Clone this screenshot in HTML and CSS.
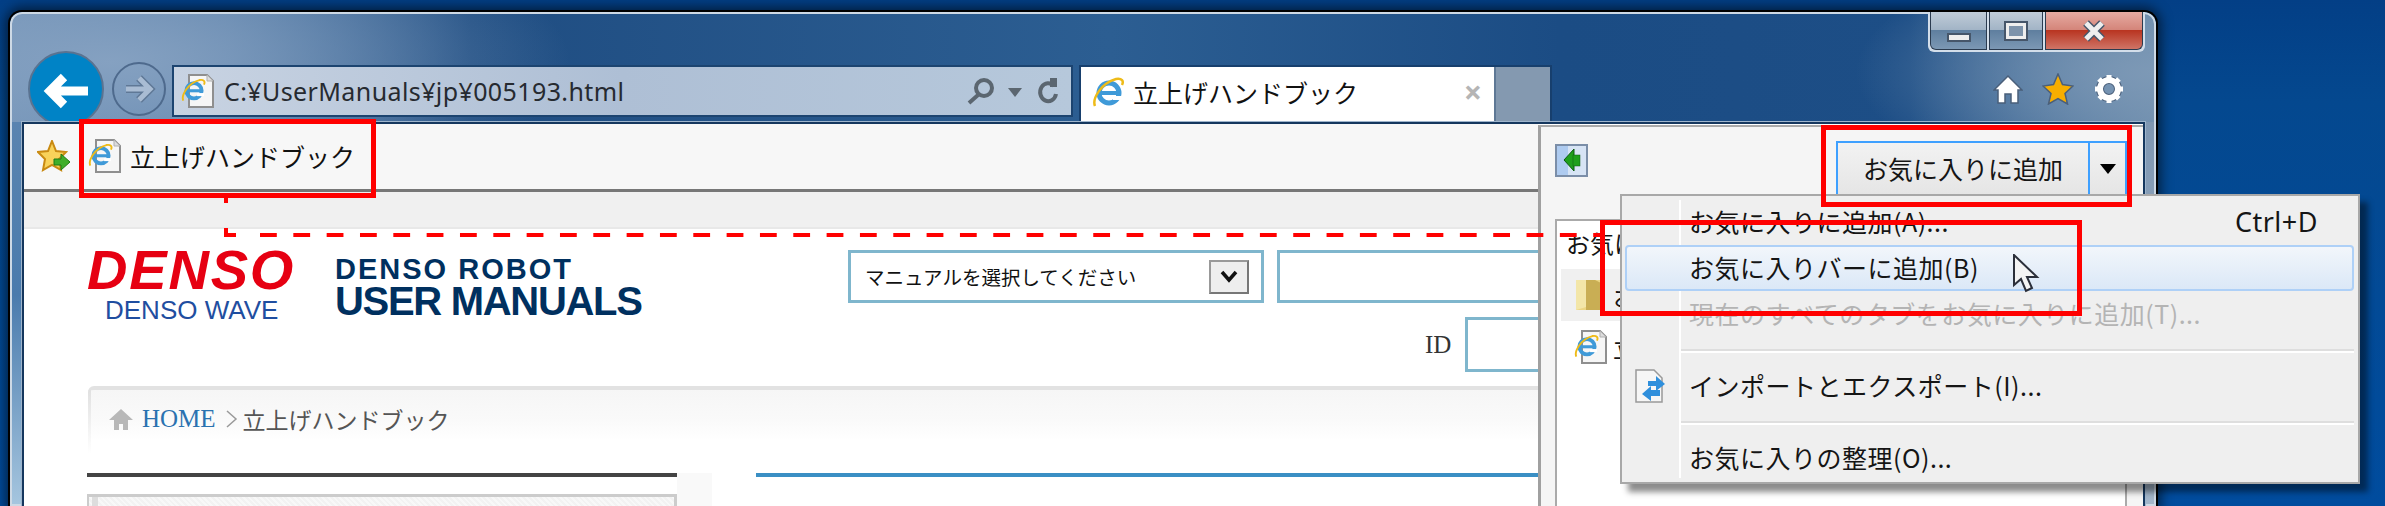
FILE: index.html
```html
<!DOCTYPE html>
<html lang="ja">
  <head>
    <meta charset="UTF-8" />
    <title>立上げハンドブック</title>
    <link rel="stylesheet" href="styles.css">
  </head>
  <body>
    <svg class="defs" width="0" height="0">
      <symbol id="ie-e" viewBox="0 0 34 34">
        <circle cx="17" cy="18" r="10" fill="none" stroke="#3f9ad8" stroke-width="5" />
        <rect x="8" y="16" width="19" height="4" fill="#3f9ad8" />
        <rect x="21" y="21" width="9" height="4" fill="#fff" />
        <path d="M3 31C0 24 9 8 24 4c6-1 8 2 6 6" fill="none" stroke="#eebb18" stroke-width="2.5" />
      </symbol>
      <symbol id="ie-page" viewBox="0 0 34 34">
        <path d="M8 1h18l6 6v26H8z" fill="#f6f6f6" stroke="#8f8f8f" stroke-width="2" />
        <path d="M26 1v6h6" fill="#ddd" stroke="#b0b0b0" stroke-width="1" />
        <use href="#ie-e" x="0" y="3" width="26" height="26" />
      </symbol>
    </svg>

    <div class="window">
      <div class="chrome">
        <button class="back">
          <svg width="72" height="72" viewBox="0 0 72 72"><path d="M34 24 20 38l14 14M22 38h36" fill="none" stroke="#fff" stroke-width="9" /></svg>
        </button>
        <button class="forward">
          <svg width="50" height="50" viewBox="0 0 50 50"><path d="M25 14l11 11-11 11M12 25h23" fill="none" stroke="#5f7896" stroke-width="8" /><path d="M25 14l11 11-11 11M12 25h23" fill="none" stroke="#a9bcd3" stroke-width="5" /></svg>
        </button>
        <div class="address">
          <svg class="icon-page" width="34" height="34"><use href="#ie-page" /></svg>
          <span class="address-text">C:¥UserManuals¥jp¥005193.html</span>
          <svg width="30" height="28" viewBox="0 0 30 28"><circle cx="18" cy="11" r="8" fill="none" stroke="#5b6670" stroke-width="4" /><path d="M12 18 3 26" stroke="#5b6670" stroke-width="4" /></svg>
          <span class="address-caret"></span>
          <svg width="22" height="28" viewBox="0 0 22 28"><path d="M17 9a8 9 0 1 0 2 8" fill="none" stroke="#5b6670" stroke-width="4" /><path d="M13 1h7v9h-7z" fill="#5b6670" /></svg>
        </div>
        <div class="tabs">
          <div class="tab">
            <svg width="34" height="34"><use href="#ie-e" /></svg>
            <span class="tab-title">立上げハンドブック</span>
            <span class="tab-close">×</span>
          </div>
          <div class="tab-new"></div>
        </div>
        <div class="chrome-right">
          <div class="caption">
            <div class="cap cap-min"><span class="glyph-min"></span></div>
            <div class="cap cap-max"><span class="glyph-max"></span></div>
            <div class="cap cap-close">
              <svg width="24" height="22" viewBox="0 0 24 22"><path d="M4 3l16 16M20 3 4 19" stroke="#46566a" stroke-width="8" /><path d="M4 3l16 16M20 3 4 19" stroke="#eee" stroke-width="5" /></svg>
            </div>
          </div>
          <div class="tools">
            <svg width="30" height="30" viewBox="0 0 30 30"><path d="M15 2 1 16h4v13h7v-9h6v9h7V16h4z" fill="#fff" stroke="#4a5f7a" stroke-width="1.5" /></svg>
            <svg width="32" height="32" viewBox="0 0 32 32"><path d="M16 1l4.500 10.500L31 13l-8 7.500L25.500 31 16 25.500 6.500 31 9 20.500 1 13l10.500-1.500z" fill="#f7ae00" stroke="#4a5f7a" stroke-width="1.500" /></svg>
            <svg width="32" height="30" viewBox="0 0 32 30"><circle cx="16" cy="15" r="9" fill="none" stroke="#4a5f7a" stroke-width="8" /><circle cx="16" cy="15" r="9" fill="none" stroke="#fff" stroke-width="6" /><path d="M16 1v28M2 15h28M6 5l20 20M26 5 6 25" stroke="#fff" stroke-width="5" stroke-dasharray="5 18" /></svg>
          </div>
        </div>
      </div>

      <div class="content">
        <div class="main">
          <div class="favbar">
            <svg class="fav-star" width="34" height="32" viewBox="0 0 34 32"><path d="M15 1l4 10 10 1-7 7 2 11-9-5-9 5 2-11-7-7 10-1z" fill="#f8d25a" stroke="#c98a12" stroke-width="2" /><path d="M17 19h7v-5l9 8-9 8v-5h-7z" fill="#3fae2a" stroke="#1f7a14" /></svg>
            <svg class="fav-page" width="34" height="34"><use href="#ie-page" /></svg>
            <span>立上げハンドブック</span>
          </div>
          <div class="cmdbar"></div>
          <div class="page">
            <div class="header">
              <div class="logo">
                <div class="logo-denso">DENSO</div>
                <div class="logo-wave">DENSO WAVE</div>
              </div>
              <div class="title">
                <div class="title-top">DENSO ROBOT</div>
                <div class="title-main">USER MANUALS</div>
              </div>
              <div class="search">
                <div class="search-row">
                  <div class="select">
                    <span>マニュアルを選択してください</span>
                    <span class="select-btn">
                      <svg width="20" height="14" viewBox="0 0 20 14"><path d="M3 2l7 8 7-8" fill="none" stroke="#111" stroke-width="3.500" /></svg>
                    </span>
                  </div>
                  <input class="field field-word" type="text" />
                </div>
                <div class="search-row search-id">
                  <span class="id-label">ID</span>
                  <input class="field field-id" type="text" />
                </div>
              </div>
            </div>
            <div class="crumb">
              <svg width="24" height="22" viewBox="0 0 24 22"><path d="M12 1 0 12h5v10h5v-6h4v6h5V12h5z" fill="#b8b8b8" /></svg>
              <a class="crumb-home">HOME</a>
              <svg width="12" height="18" viewBox="0 0 12 18"><path d="M1 1l9 8-9 8" fill="none" stroke="#999" stroke-width="1.500" /></svg>
              <span class="crumb-here">立上げハンドブック</span>
            </div>
            <div class="lower">
              <div class="lower-left"><div class="lower-box"></div></div>
              <div class="lower-strip"></div>
              <div class="lower-right"></div>
            </div>
          </div>
        </div>

        <div class="panel">
          <div class="panel-head">
            <svg class="panel-pin" width="33" height="33" viewBox="0 0 33 33"><rect x="1" y="1" width="31" height="31" fill="#d7e4f5" stroke="#7b8ea8" stroke-width="2" /><rect x="2" y="2" width="11" height="29" fill="#aecbf0" /><path d="M9 16 19 5v22z" fill="#1fa01c" stroke="#0c5a10" /><rect x="18" y="11" width="7" height="11" fill="#1fa01c" stroke="#0c5a10" stroke-width="0.500" /></svg>
            <div class="add-btn">
              <span class="add-main">お気に入りに追加</span>
              <span class="add-drop"></span>
            </div>
          </div>
          <div class="fav-list">
            <div class="fav-tab">お気に入り</div>
            <div class="fav-row fav-row-on">
              <svg width="34" height="34" viewBox="0 0 34 34"><path d="M2 2h25v30H2z" fill="#ecd684" /><path d="M12 2h9l6 3v27H12z" fill="#c9ae54" /><path d="M2 2h10v27L2 32z" fill="#f3e6a8" /></svg>
              <span>お気に入りバー</span>
            </div>
            <div class="fav-row">
              <svg width="34" height="34"><use href="#ie-page" /></svg>
              <span>立上げハンドブック</span>
            </div>
          </div>
        </div>
      </div>
    </div>

    <div class="menu">
      <div class="menu-item"><span>お気に入りに追加(A)...</span><span class="menu-key">Ctrl+D</span></div>
      <div class="menu-item menu-item-on"><span>お気に入りバーに追加(B)</span></div>
      <div class="menu-item menu-item-off"><span>現在のすべてのタブをお気に入りに追加(T)...</span></div>
      <div class="menu-sep"></div>
      <div class="menu-item">
        <svg class="menu-icon" width="34" height="34" viewBox="0 0 34 34"><path d="M3 1h18l8 8v24H3z" fill="#f6f6f6" stroke="#999" stroke-width="1.500" /><path d="M15 12h8V7l9 8-9 7v-5h-8z" fill="#2f8fdc" /><path d="M27 21h-9v-4l-9 8 9 7v-5h9z" fill="#2f8fdc" /></svg>
        <span>インポートとエクスポート(I)...</span>
      </div>
      <div class="menu-sep"></div>
      <div class="menu-item"><span>お気に入りの整理(O)...</span></div>
    </div>

    <!-- red callouts drawn on top of the screenshot -->
    <div class="callout callout-link"></div>
    <div class="callout callout-add"></div>
    <div class="callout callout-bar"></div>
    <svg class="callout-line" width="1610" height="240" viewBox="0 0 1610 240">
      <path d="M226 198v5M226 228v7h10" fill="none" stroke="#f00" stroke-width="4" />
      <path d="M260 235H1600" fill="none" stroke="#f00" stroke-width="4" stroke-dasharray="16.800 16.530" />
    </svg>
    <svg class="cursor" width="28" height="42" viewBox="0 0 28 42">
      <path d="M2 1v30l7-6 5 12 6-3-5-11h10z" fill="#f4f4f4" stroke="#2b2f3a" stroke-width="2" />
    </svg>
  </body>
</html>
```

FILE: styles.css
```css
* {
  box-sizing: border-box;
}
html,
body {
  height: 100%;
}
body {
  margin: 0;
  width: 2385px;
  height: 506px;
  overflow: hidden;
  position: relative;
  padding: 12px 229px 0 10px;
  font-family: "Noto Sans", "Noto Sans CJK JP", sans-serif;
  color: #151515;
  background: linear-gradient(#033f86, #04488f 20%, #004c9e);
}
.defs {
  position: absolute;
}

/* window frame */
.window {
  width: 2146px;
  height: 494px;
  display: flex;
  flex-direction: column;
  padding: 0 11px 0 12px;
  border-radius: 12px 12px 0 0;
  box-shadow: inset 0 0 0 2px #cdd9e5, 0 0 0 2px #000, 0 0 12px 5px rgba(0, 0, 0, 0.55);
  background:
    linear-gradient(#5a84b0, #4a7bad 45%, #a6c6df) 0 110px / 14px 384px no-repeat,
    linear-gradient(#7f97b2, #a3b6ca) 100% 110px / 14px 384px no-repeat,
    radial-gradient(ellipse 460px 150px at 100px 50px, #85a1c1, rgba(133, 161, 193, 0) 100%),
    radial-gradient(ellipse 300px 120px at 100% 60px, #7d99b6, rgba(125, 153, 182, 0) 100%),
    linear-gradient(90deg, #6e90b5, #5279a5 220px, #1f4d82 460px, #2c5e92 1100px, #1b4c84 1550px, #1d4e86 1900px, #6788a9 2146px);
}
.chrome {
  height: 110px;
  flex: none;
  display: flex;
  align-items: flex-start;
}
.back,
.forward {
  padding: 0;
  flex: none;
  display: flex;
  align-items: center;
  justify-content: center;
  border-radius: 50%;
}
.back {
  width: 76px;
  height: 76px;
  margin: 39px 0 0 6px;
  background-color: #0083c6;
  border: 2px solid #5a7391;
}
.forward {
  width: 54px;
  height: 54px;
  margin: 50px 0 0 8px;
  background: transparent;
  border: 2px solid #4e6a8d;
}
.address {
  width: 901px;
  height: 52px;
  margin: 53px 0 0 6px;
  flex: none;
  display: flex;
  align-items: center;
  padding: 0 12px 0 7px;
  border: 2px solid #1c4470;
  background: linear-gradient(90deg, #c8d3e2, #aebfd5 50%, #b6c8db);
}
.address-text {
  margin-left: 9px;
  flex: 1;
  font-size: 25px;
  letter-spacing: 0.4px;
  color: #262a30;
}
.address-caret {
  width: 0;
  height: 0;
  margin: 2px 15px 0 12px;
  border: 7px solid transparent;
  border-top: 9px solid #5b6670;
  border-bottom: 0;
}
.tabs {
  width: 473px;
  height: 57px;
  margin: 53px 0 0 6px;
  flex: none;
  display: flex;
  border: 2px solid #173f6d;
  border-bottom: 0;
}
.tab {
  flex: 1;
  display: flex;
  align-items: center;
  padding: 0 12px 6px 11px;
  background-color: #fff;
  margin-left: 0;
}
.tab-title {
  flex: 1;
  margin-left: 7px;
  font-size: 25px;
  color: #111;
}
.tab-close {
  font-size: 32px;
  line-height: 1;
  font-weight: 700;
  color: #b5b5b5;
}
.tab-new {
  width: 56px;
  background-color: #8499b0;
  border-left: 2px solid #5e7895;
}
.chrome-right {
  margin-left: auto;
  width: 217px;
  flex: none;
}
.caption {
  height: 40px;
  display: flex;
  gap: 2px;
  padding: 0 2px 2px;
  background-color: #d3deea;
  border-radius: 0 0 6px 6px;
}
.cap {
  display: flex;
  align-items: center;
  justify-content: center;
  border: 1px solid #2b3b4f;
  border-top: 0;
}
.cap-min {
  width: 57px;
  border-radius: 0 0 0 6px;
  background: linear-gradient(#c0ccd8, #a2b4c6 48%, #5f7f9f 50%, #7c98b4);
}
.cap-max {
  width: 54px;
  background: linear-gradient(#c0ccd8, #a2b4c6 48%, #5f7f9f 50%, #7c98b4);
}
.cap-close {
  flex: 1;
  border-radius: 0 0 6px 0;
  background: linear-gradient(#e6aba2, #d4857a 48%, #b93521 50%, #cf7466);
}
.glyph-min {
  width: 24px;
  height: 9px;
  margin-top: 14px;
  background-color: #eee;
  border: 2px solid #46566a;
}
.glyph-max {
  width: 24px;
  height: 20px;
  background-color: #eee;
  border: 2px solid #46566a;
  position: relative;
  box-shadow: inset 0 0 0 3px #eee, inset 0 0 0 10px #7d93ab;
}
.tools {
  margin-top: 21px;
  padding-right: 20px;
  display: flex;
  justify-content: flex-end;
  align-items: center;
  gap: 19px;
}

/* browser content area */
.content {
  flex: 1;
  min-height: 0;
  position: relative;
  display: flex;
  border: 2px solid #15375e;
  border-bottom: 0;
  background-color: #fff;
  outline: 1px solid #9fb5cc;
}
.main {
  flex: 1;
  min-width: 0;
  overflow: hidden;
  display: flex;
  flex-direction: column;
}
.favbar {
  height: 68px;
  flex: none;
  display: flex;
  align-items: center;
  padding: 0 0 2px 13px;
  background-color: #f7f7f7;
  border-bottom: 3px solid #777;
  font-size: 25px;
  color: #111;
}
.fav-page {
  margin: 0 8px 0 17px;
}
.cmdbar {
  height: 37px;
  flex: none;
  background-color: #f0f0f0;
  border-bottom: 2px solid #e8e8e8;
}
.page {
  flex: 1;
  min-height: 0;
  display: flex;
  flex-direction: column;
}
.header {
  height: 157px;
  flex: none;
  display: flex;
  padding: 21px 0 0 63px;
  font-family: "Liberation Sans", sans-serif;
}
.logo {
  width: 248px;
  flex: none;
}
.logo-denso {
  font-size: 56px;
  line-height: 40px;
  font-weight: 700;
  font-style: italic;
  letter-spacing: 1.800px;
  color: #e60012;
}
.logo-wave {
  margin: 11px 0 0 18px;
  font-size: 26px;
  line-height: 19px;
  color: #1f4ea0;
}
.title {
  width: 513px;
  flex: none;
  color: #00305f;
  font-weight: 700;
}
.title-top {
  margin-top: 9px;
  font-size: 29px;
  line-height: 21px;
  letter-spacing: 2px;
}
.title-main {
  margin-top: 6px;
  font-size: 40px;
  line-height: 30px;
  letter-spacing: -1.300px;
}
.search {
  flex: none;
}
.search-row {
  display: flex;
}
.select {
  width: 416px;
  height: 53px;
  display: flex;
  align-items: center;
  justify-content: space-between;
  padding: 0 12px 0 14px;
  border: 3px solid #7fb6cd;
  font-family: "Noto Sans CJK JP", sans-serif;
  font-size: 19.500px;
  color: #111;
}
.select-btn {
  width: 40px;
  height: 34px;
  display: flex;
  align-items: center;
  justify-content: center;
  background-color: #eee;
  border: 2px solid #999;
  border-bottom-color: #777;
  border-right-color: #777;
}
.field {
  padding: 0;
  border: 3px solid #7fb6cd;
  background-color: #fff;
}
.field-word {
  width: 300px;
  height: 53px;
  margin-left: 13px;
}
.search-id {
  margin-top: 14px;
  padding-left: 577px;
  align-items: center;
}
.id-label {
  width: 40px;
  font-family: "Liberation Serif", serif;
  font-size: 25px;
  color: #333;
}
.field-id {
  width: 150px;
  height: 55px;
}
.crumb {
  height: 67px;
  flex: none;
  margin-left: 64px;
  display: flex;
  align-items: center;
  padding: 0 0 6px 21px;
  border-top: 4px solid #e2e2e2;
  border-radius: 6px 0 0 0;
  background:
    linear-gradient(#e0e0e0, #fff) left top / 3px 100% no-repeat,
    linear-gradient(#f6f6f6, #fafafa 50%, #fff 80%);
}
.crumb-home {
  margin: 0 10px 0 9px;
  font-family: "Liberation Serif", serif;
  font-size: 25px;
  color: #2a72b0;
}
.crumb-here {
  margin-left: 5px;
  font-family: "Noto Sans CJK JP", sans-serif;
  font-size: 23px;
  color: #555;
}
.lower {
  flex: 1;
  min-height: 0;
  margin: 20px 0 0 63px;
  display: flex;
}
.lower-left {
  width: 590px;
  flex: none;
  padding-top: 17px;
  border-top: 4px solid #444;
}
.lower-box {
  height: 40px;
  border: 3px solid #ccc;
  border-bottom: 0;
  border-left-width: 2px;
  background:
    linear-gradient(#ddd, #ddd) 3px 0 / 6px 100% no-repeat,
    repeating-linear-gradient(45deg, #f2f2f2 0 2px, #f8f8f8 2px 4px);
}
.lower-strip {
  width: 35px;
  flex: none;
  background-color: #f9f9f9;
}
.lower-right {
  flex: 1;
  margin-left: 44px;
  border-top: 4px solid #3a8fc4;
}

/* favourites pane */
.panel {
  width: 605px;
  flex: none;
  display: flex;
  flex-direction: column;
  background-color: #f5f5f5;
  border-left: 3px solid #a0a0a0;
  border-top: 2px solid #aaa;
  margin-top: 1px;
}
.panel-head {
  height: 92px;
  flex: none;
  display: flex;
  align-items: flex-start;
  padding: 14px 16px 0 14px;
}
.panel-pin {
  margin-top: 3px;
}
.add-btn {
  width: 291px;
  height: 60px;
  margin-left: auto;
  display: flex;
  border: 2px solid #3ea0ff;
  background: linear-gradient(#f2f2f2, #e4e4e4);
  font-size: 25px;
}
.add-main {
  flex: 1;
  display: flex;
  align-items: center;
  justify-content: center;
  padding-bottom: 6px;
  border-right: 2px solid #3ea0ff;
  font-family: "Noto Sans CJK JP", sans-serif;
}
.add-drop {
  width: 35px;
  position: relative;
}
.add-drop::after {
  content: "";
  position: absolute;
  left: 10px;
  top: 21px;
  border: 8px solid transparent;
  border-top: 10px solid #000;
  border-bottom: 0;
}
.fav-list {
  flex: 1;
  margin: 0 16px 0 14px;
  padding-left: 4px;
  border: 2px solid #aaa;
  border-bottom: 0;
  background-color: #fff;
  font-family: "Noto Sans CJK JP", sans-serif;
  font-size: 24px;
}
.fav-tab {
  height: 48px;
  padding: 1px 0 0 5px;
  line-height: 42px;
  white-space: nowrap;
}
.fav-row {
  height: 52px;
  display: flex;
  align-items: center;
  gap: 5px;
  padding-left: 13px;
  white-space: nowrap;
}
.fav-row-on {
  background-color: #f0f0f0;
}

/* popup menu */
.menu {
  position: absolute;
  left: 1620px;
  top: 194px;
  width: 740px;
  height: 290px;
  padding: 3px 4px 0 3px;
  border: 2px solid #a8a8a8;
  background-color: #efefef;
  box-shadow: 8px 8px 6px rgba(0, 0, 0, 0.45);
  font-family: "Noto Sans CJK JP", sans-serif;
  font-size: 25px;
  letter-spacing: 0.5px;
  color: #151515;
}
.menu::before {
  content: "";
  position: absolute;
  left: 57px;
  top: 4px;
  bottom: 4px;
  width: 2px;
  background-color: #fff;
}
.menu-item {
  height: 46px;
  position: relative;
  display: flex;
  align-items: center;
  justify-content: space-between;
  padding: 0 34px 2px 62px;
  border: 2px solid transparent;
  white-space: nowrap;
}
.menu-item-on {
  border-color: #aed0f7;
  border-radius: 4px;
  background: linear-gradient(#f2f6fb, #dbe8f7);
}
.menu-item-off {
  color: #b4b4b4;
}
.menu-key {
  font-family: "Noto Sans", sans-serif;
  font-size: 27px;
}
.menu-icon {
  position: absolute;
  left: 6px;
  top: 4px;
}
.menu-sep {
  height: 4px;
  margin: 12px 0 10px 56px;
  background: linear-gradient(#dedede 50%, #fff 50%);
  position: relative;
}

/* red annotations */
.callout {
  position: absolute;
  border: 5px solid #f00;
}
.callout-link {
  left: 79px;
  top: 119px;
  width: 297px;
  height: 79px;
}
.callout-add {
  left: 1821px;
  top: 125px;
  width: 311px;
  height: 82px;
}
.callout-bar {
  left: 1600px;
  top: 220px;
  width: 482px;
  height: 96px;
}
.callout-line {
  position: absolute;
  left: 0;
  top: 0;
}
.cursor {
  position: absolute;
  left: 2012px;
  top: 254px;
}
```
